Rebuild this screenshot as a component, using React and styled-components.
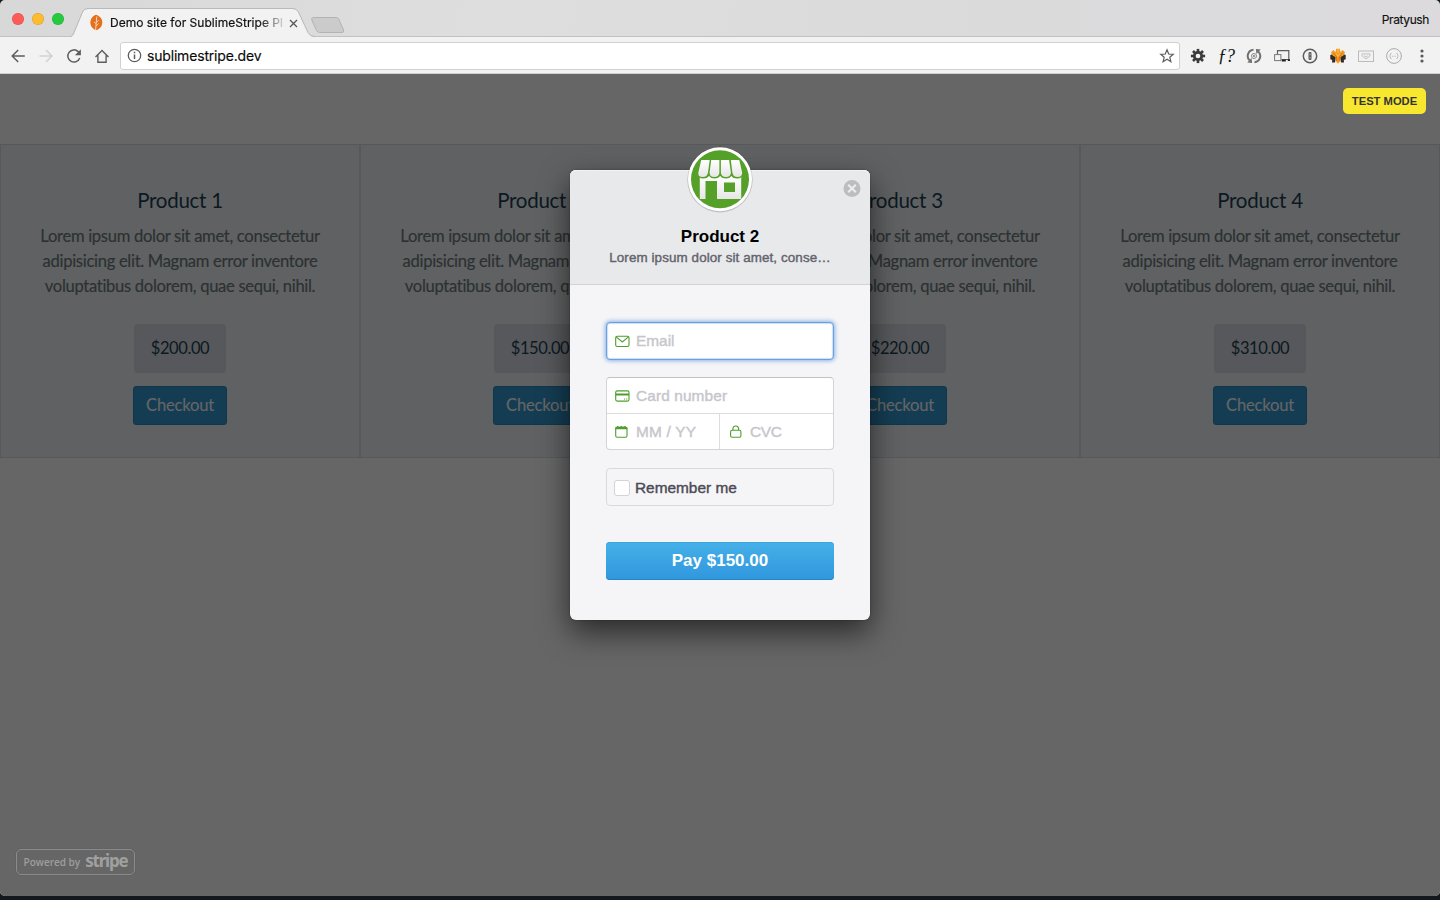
import React from "react";
import styled, { createGlobalStyle, css } from "styled-components";

const GlobalStyle = createGlobalStyle`
  *, *::before, *::after { box-sizing: border-box; }
  html, body { margin: 0; padding: 0; }
  body { background: #14181d; overflow: hidden; -webkit-font-smoothing: antialiased; }
  button, input { font: inherit; }
`;

const Window = styled.div`
  width: 1440px;
  height: 896px;
  display: flex;
  flex-direction: column;
  overflow: hidden;
  border-radius: 5px;
  background: #666;
  font-family: Inter, "Liberation Sans", sans-serif;
`;

/* ---------- Browser chrome ---------- */

const TabStrip = styled.div`
  flex: none;
  height: 37px;
  display: flex;
  align-items: flex-end;
  padding-left: 12px;
  background: linear-gradient(100deg, #d8d8d9 0%, #dededf 35%, #dadadb 70%, #dcdadd 100%);
  box-shadow: inset 0 -1px #c2c2c3;
`;

const Lights = styled.div`
  display: flex;
  gap: 8px;
  align-self: center;
  margin-top: 1px;
`;

const Light = styled.span`
  width: 12px;
  height: 12px;
  border-radius: 50%;
  background: ${(p) => p.$fill};
  box-shadow: inset 0 0 0 0.5px rgba(0, 0, 0, 0.15);
`;

const Tab = styled.div`
  position: relative;
  width: 244px;
  height: 29px;
  margin-left: 7px;
  display: flex;
  align-items: center;
  padding-left: 19px;
`;

const TabShape = styled.svg`
  position: absolute;
  left: 0;
  top: 0;
`;

const Favicon = styled.svg`
  position: relative;
  flex: none;
`;

const TabTitle = styled.span`
  position: relative;
  width: 173px;
  margin-left: 7px;
  padding-top: 1px;
  white-space: nowrap;
  font-size: 12px;
  line-height: 18px;
  font-weight: 400;
  letter-spacing: 0.02px;
  color: #111;
  -webkit-text-stroke: 0.2px #111;
  mask-image: linear-gradient(90deg, #000 150px, rgba(0, 0, 0, 0.15) 173px);
`;

const TabClose = styled.svg`
  position: relative;
  margin: 1px 0 0 6px;
`;

const NewTab = styled.svg`
  margin: 0 0 3px -5px;
`;

const Profile = styled.span`
  margin: 0 11px 8px auto;
  font-size: 12px;
  line-height: 18px;
  letter-spacing: -0.4px;
  color: #111;
  -webkit-text-stroke: 0.15px #111;
`;

const Toolbar = styled.div`
  flex: none;
  height: 37px;
  display: flex;
  align-items: center;
  padding: 0 10px;
  background: #f2f2f2;
  box-shadow: inset 0 -1px #d0d0d0;
`;

const NavGroup = styled.div`
  display: flex;
  gap: 12px;
`;

const Icon = styled.svg`
  flex: none;
  display: block;
`;

const AddressBar = styled.div`
  width: 1060px;
  height: 28px;
  margin-left: 10px;
  padding: 0 4px 0 6px;
  display: flex;
  align-items: center;
  border: 1px solid #d0d0d0;
  border-radius: 3px;
  background: #fff;
`;

const Url = styled.span`
  flex: 1;
  margin-left: 5px;
  padding-top: 1px;
  font-size: 14px;
  line-height: 20px;
  letter-spacing: -0.18px;
  color: #0a0a0a;
  -webkit-text-stroke: 0.15px #0a0a0a;
`;

const Extensions = styled.div`
  display: flex;
  align-items: center;
  gap: 12px;
  margin-left: 10px;
`;

const FunctionGlyph = styled.span`
  width: 16px;
  display: flex;
  justify-content: center;
  align-items: center;
  white-space: nowrap;
  font: italic 18px/18px "Liberation Serif", serif;
  letter-spacing: -0.8px;
  color: #111;
`;

/* ---------- Store page ---------- */

const Viewport = styled.main`
  position: relative;
  flex: 1;
  background: #fff;
`;

const Products = styled.section`
  display: grid;
  grid-template-columns: repeat(4, 1fr);
  padding-top: 70px;
`;

const Card = styled.article`
  height: 314px;
  padding: 41px 20px 0;
  display: flex;
  flex-direction: column;
  align-items: center;
  text-align: center;
  background: #f1f3f5;
  border: 1px solid #d8dce0;
  font-family: Lato, sans-serif;
`;

const CardTitle = styled.h2`
  margin: 0;
  font-size: 20.5px;
  line-height: 28px;
  font-weight: 400;
  letter-spacing: -0.25px;
  color: #1c4255;
`;

const CardText = styled.p`
  margin: 10px 0 25px;
  font-size: 16.6px;
  line-height: 25px;
  letter-spacing: -0.31px;
  color: #6b7b7c;
  -webkit-text-stroke: 0.15px #6b7b7c;
  white-space: nowrap;
`;

const Price = styled.div`
  width: 92px;
  height: 49px;
  padding-bottom: 1px;
  display: flex;
  align-items: center;
  justify-content: center;
  border-radius: 4px;
  background: #d9dbe3;
  font-size: 16.5px;
  letter-spacing: -0.4px;
  color: #1c4255;
`;

const CheckoutButton = styled.button`
  width: 94px;
  height: 39px;
  margin-top: 13px;
  padding: 0 0 1px;
  border: 1px solid #2c88bb;
  border-radius: 3px;
  background: #3498cf;
  color: #fff;
  font-size: 16.6px;
  letter-spacing: -0.2px;
`;

/* ---------- Checkout overlay ---------- */

const Overlay = styled.div`
  position: absolute;
  inset: 0;
  display: flex;
  justify-content: center;
  align-items: flex-start;
  padding-top: 96px;
  background: rgba(0, 0, 0, 0.6);
  font-family: "Liberation Sans", sans-serif;
`;

const TestBadge = styled.span`
  position: absolute;
  top: 14px;
  right: 14px;
  width: 83px;
  height: 26px;
  display: flex;
  align-items: center;
  justify-content: center;
  border-radius: 5px;
  background: #f8e72f;
  color: #333;
  font-size: 11.200px;
  font-weight: 700;
`;

const Modal = styled.div`
  position: relative;
  width: 300px;
  height: 450px;
  border-radius: 6px;
  background: #f5f5f7;
  box-shadow: 0 12px 30px rgba(0, 0, 0, 0.6), 0 0 2px rgba(0, 0, 0, 0.35);
`;

const ModalHeader = styled.header`
  height: 115px;
  padding-top: 57px;
  text-align: center;
  border-radius: 6px 6px 0 0;
  border-bottom: 1px solid #d2d2d5;
  background: #e8e9eb;
  box-shadow: inset 0 1px #f3f3f4;
`;

const StoreLogo = styled.svg`
  position: absolute;
  left: 115px;
  top: -26px;
`;

const CloseButton = styled.svg`
  position: absolute;
  right: 9px;
  top: 9px;
`;

const ModalTitle = styled.h1`
  margin: 0;
  font-size: 17px;
  line-height: 20px;
  font-weight: 700;
  color: #000;
`;

const mediumWeight = css`
  font-weight: 400;
  -webkit-text-stroke: 0.4px currentColor;
`;

const ModalDescription = styled.p`
  margin: 2px 0 0;
  font-size: 13.4px;
  line-height: 17px;
  letter-spacing: 0.1px;
  color: #63636d;
  ${mediumWeight}
`;

const Form = styled.div`
  padding: 37px 36px 0;
  display: flex;
  flex-direction: column;
`;

const Field = styled.label`
  flex: 1;
  height: 36px;
  display: flex;
  align-items: center;
  gap: 6px;
  padding-left: ${(p) => p.$inset || 8}px;
  font-size: 15.4px;
  line-height: 18px;
  letter-spacing: ${(p) => p.$spacing || 0}px;
  color: #c6c6cb;
  ${mediumWeight}
`;

const EmailBox = styled.div`
  height: 38px;
  display: flex;
  align-items: center;
  border: 1px solid #6a9fe0;
  border-radius: 4px;
  background: #fff;
  box-shadow: 0 0 4px 1px rgba(70, 135, 220, 0.6), inset 0 0 1px 0.5px rgba(70, 135, 220, 0.5);
`;

const CardBox = styled.div`
  height: 73px;
  margin-top: 17px;
  border: 1px solid #d4d4d7;
  border-top-color: #c2c2c6;
  border-radius: 4px;
  background: #fff;
`;

const FieldRow = styled.div`
  display: flex;
  height: ${(p) => p.$height}px;
  align-items: center;
  border-bottom: ${(p) => (p.$divided ? "1px solid #dcdcdf" : "0")};
`;

const Divider = styled.span`
  width: 1px;
  align-self: stretch;
  background: #dcdcdf;
`;

const RememberBox = styled.label`
  height: 38px;
  margin-top: 18px;
  display: flex;
  align-items: center;
  gap: 5px;
  padding: 1px 0 0 7px;
  border: 1px solid #d9d9dc;
  border-radius: 4px;
  font-size: 15.4px;
  line-height: 18px;
  color: #4b4a56;
  ${mediumWeight}
`;

const Check = styled.span`
  width: 16px;
  height: 16px;
  border: 1px solid #d3d3d6;
  border-radius: 3px;
  background: #fff;
`;

const PayButton = styled.button`
  height: 38px;
  margin-top: 36px;
  padding: 0 0 1px;
  border: 0;
  border-radius: 4px;
  background: linear-gradient(#45b0e8, #3097de);
  box-shadow: inset 0 1px #3fa5dd, inset 0 -1px #2784ca;
  color: #fff;
  font-size: 17px;
  font-weight: 700;
`;

const PoweredBy = styled.div`
  position: absolute;
  left: 16px;
  bottom: 21px;
  width: 119px;
  height: 26px;
  display: flex;
  align-items: center;
  justify-content: center;
  gap: 5px;
  border: 1.5px solid #8b8b8b;
  border-radius: 5px;
  box-shadow: 0 0 1px rgba(0, 0, 0, 0.35);
  color: #9e9e9e;
  font: 600 10px/16px "Open Sans", sans-serif;
`;

const StripeWord = styled.b`
  font: 700 17px/20px "Noto Sans", sans-serif;
  letter-spacing: -1.200px;
  margin-top: -3px;
  color: #a0a0a0;
`;

const line = { fill: "none", stroke: "#5d5d5d", strokeWidth: 1.5 };
const green = { fill: "none", stroke: "#4f9d2c", strokeWidth: 1.1 };

const gearTeeth = [0, 45, 90, 135, 180, 225, 270, 315];

function BrowserTabs() {
  return (
    <TabStrip>
      <Lights>
        <Light $fill="#fc5b57" />
        <Light $fill="#fdbc2d" />
        <Light $fill="#27c93f" />
      </Lights>
      <Tab>
        <TabShape width="244" height="29" viewBox="0 0 244 29">
          <path d="M0 29 C3 28 3 26 4 23 L12 4 Q13.500 1 17 1 H222 Q225.500 1 227 4 L237 25 Q238.500 28.500 243 29 Z" fill="#f2f2f2" />
          <path d="M-1 28.500 C1.500 28 2 26.500 3 24.500 L11.500 4 Q13 .5 17 .5 H222 Q225.500 .5 227.500 4 L237 24.500 Q239 28.500 244 28.500" fill="none" stroke="#b9b9ba" />
        </TabShape>
        <Favicon width="13" height="17" viewBox="0 0 13 17">
          <path d="M6 .8 C2.500 2 .4 5 .4 8.500 C.4 12 2.600 14.900 6 16.200 C10 15 12.300 12 12.300 8.500 C12.300 5 9.900 2 6 .8Z" fill="#e56f1b" />
          <path d="M6.800 2.500 L5.600 16 M6.300 8.700 L8.500 6.200 M6 12.200 L8.500 9.500 M4 8 L6.100 9.700" stroke="#f9dcc4" strokeWidth=".9" fill="none" />
        </Favicon>
        <TabTitle>Demo site for SublimeStripe Pl</TabTitle>
        <TabClose width="9" height="9" viewBox="0 0 9 9">
          <path d="M1 1 L8 8 M8 1 L1 8" stroke="#555" strokeWidth="1.3" />
        </TabClose>
      </Tab>
      <NewTab width="36" height="18" viewBox="0 0 36 18">
        <path d="M3.500 1.500 H26 Q28 1.500 29 3.500 L33.500 14 Q34.500 16.500 32 16.500 H9.500 Q7.500 16.500 6.500 14.500 L1.800 4 Q1 1.500 3.500 1.500Z" fill="#cbcbcb" stroke="#b3b3b3" />
      </NewTab>
      <Profile>Pratyush</Profile>
    </TabStrip>
  );
}

function BrowserToolbar() {
  return (
    <Toolbar>
      <NavGroup>
        <Icon width="16" height="16" viewBox="0 0 16 16">
          <path d="M14.800 8 H2.500 M8.200 2 L2.200 8 L8.200 14" {...line} />
        </Icon>
        <Icon width="16" height="16" viewBox="0 0 16 16">
          <path d="M1.500 8 H13.800 M8 2 L14 8 L8 14" {...line} stroke="#d2d2d2" />
        </Icon>
        <Icon width="16" height="16" viewBox="0 0 16 16">
          <path d="M13.700 10 A6.100 6.100 0 1 1 12.200 3.600 L13.500 5" {...line} />
          <path d="M14.900 1.200 V7.200 H8.900Z" fill="#5d5d5d" />
        </Icon>
        <Icon width="16" height="16" viewBox="0 0 16 16">
          <path d="M1.500 9 L8 2.400 L14.500 9 M3.900 7.300 V14.200 H12.100 V7.300" {...line} strokeWidth="1.400" />
        </Icon>
      </NavGroup>
      <AddressBar>
        <Icon width="15" height="15" viewBox="0 0 15 15">
          <circle cx="7.500" cy="7.500" r="6.200" {...line} strokeWidth="1.300" />
          <path d="M7.500 6.500 V11 M7.500 3.800 V5.300" stroke="#5d5d5d" strokeWidth="1.500" />
        </Icon>
        <Url>sublimestripe.dev</Url>
        <Icon width="16" height="16" viewBox="0 0 16 16">
          <path d="M8 1.800 L9.700 6 L14.300 6.300 L10.800 9.300 L11.900 13.700 L8 11.300 L4.100 13.700 L5.200 9.300 L1.700 6.300 L6.300 6Z" {...line} strokeWidth="1.200" />
        </Icon>
      </AddressBar>
      <Extensions>
        <Icon width="16" height="16" viewBox="0 0 16 16">
          {gearTeeth.map((a) => (
            <rect key={a} x="6.700" y=".9" width="2.600" height="4" fill="#3b3b3b" transform={`rotate(${a} 8 8)`} />
          ))}
          <circle cx="8" cy="8" r="3.700" fill="none" stroke="#3b3b3b" strokeWidth="2.700" />
        </Icon>
        <FunctionGlyph>ƒ?</FunctionGlyph>
        <Icon width="16" height="16" viewBox="0 0 16 16">
          <path d="M7.500 1.800 A6.200 6.200 0 0 0 3.600 12.400 M8.500 14.200 A6.200 6.200 0 0 0 12.400 3.600" {...line} stroke="#6f6f6f" strokeWidth="2" />
          <path d="M1.300 14.500 L6.100 14.900 L5.600 10.100Z M14.700 1.500 L9.900 1.100 L10.400 5.900Z" fill="#6f6f6f" />
          <circle cx="8" cy="8" r="2.500" {...line} stroke="#888" strokeWidth="1" />
          <circle cx="8" cy="8" r="1" fill="#777" />
        </Icon>
        <Icon width="16" height="16" viewBox="0 0 16 16">
          <path d="M3.500 6 V2.600 H14.800 V11.500 H7.500" {...line} strokeWidth="1.200" />
          <rect x=".6" y="6.600" width="6.300" height="6" {...line} stroke="#777" strokeWidth="1" />
          <path d="M7.800 11.500 H11.800 V13.400 H7.800Z M13.800 11.300 H16 V13 H13.800Z" fill="#222" />
        </Icon>
        <Icon width="16" height="16" viewBox="0 0 16 16">
          <circle cx="8" cy="8" r="6.700" {...line} strokeWidth="1.500" />
          <rect x="6.500" y="3.900" width="3" height="8.200" rx="1" fill="#5d5d5d" />
          <path d="M8 5.500 V7.300 M8 9 V10.500" stroke="#ddd" strokeWidth=".7" />
        </Icon>
        <Icon width="16" height="16" viewBox="0 0 16 16">
          <path d="M.3 7 L3 6 L6 9 L5 14.500 L2 14.500 L2.200 12 L.3 11.300Z M15.700 7 L13 6 L10 9 L11 14.500 L14 14.500 L13.800 12 L15.700 11.300Z" fill="#352b25" />
          <path d="M.9 4.300 L3.500 2 L5.600 4.300 L6.200 .8 H9.800 L10.400 4.300 L12.500 2 L15.100 4.300 L13.200 7.800 L10.600 9 L10.300 13 L8 15.700 L5.700 13 L5.400 9 L2.800 7.800Z" fill="#f39b21" />
          <path d="M3.300 5 L6.500 8.300 L6.800 13 M12.700 5 L9.500 8.300 L9.200 13" stroke="#dc6f1b" strokeWidth="1" fill="none" />
          <path d="M8 1 V5 M6 5.500 L8 8.500 L10 5.500" stroke="#ffc45b" strokeWidth="1" fill="none" />
        </Icon>
        <Icon width="16" height="16" viewBox="0 0 16 16">
          <rect x=".5" y="3" width="15" height="10.500" {...line} stroke="#bcbcbc" strokeWidth="1" />
          <path d="M4 5.900 H12 V7.800 L8 11 L4 7.800Z M6.200 7.700 L8 9 L9.800 7.700" {...line} stroke="#bcbcbc" strokeWidth=".9" />
        </Icon>
        <Icon width="16" height="16" viewBox="0 0 16 16">
          <circle cx="8" cy="8" r="7.400" {...line} stroke="#aaa" strokeWidth="1" />
          <path d="M5.500 5.300 Q4.400 5.300 4.400 6.400 V7.300 L3.600 8 L4.400 8.700 V9.600 Q4.400 10.700 5.500 10.700 M10.500 5.300 Q11.600 5.300 11.600 6.400 V7.300 L12.400 8 L11.600 8.700 V9.600 Q11.600 10.700 10.500 10.700 M6.200 8.300 H7 M7.600 8.300 H8.400 M9 8.300 H9.800" {...line} stroke="#aaa" strokeWidth=".8" />
        </Icon>
        <Icon width="16" height="16" viewBox="0 0 16 16" fill="#5a5a5a">
          <circle cx="8" cy="3" r="1.600" />
          <circle cx="8" cy="8" r="1.600" />
          <circle cx="8" cy="13" r="1.600" />
        </Icon>
      </Extensions>
    </Toolbar>
  );
}

const products = [
  { name: "Product 1", price: "$200.00" },
  { name: "Product 2", price: "$150.00" },
  { name: "Product 3", price: "$220.00" },
  { name: "Product 4", price: "$310.00" },
];

function ProductCard({ name, price }) {
  return (
    <Card>
      <CardTitle>{name}</CardTitle>
      <CardText>
        Lorem ipsum dolor sit amet, consectetur
        <br />
        adipisicing elit. Magnam error inventore
        <br />
        voluptatibus dolorem, quae sequi, nihil.
      </CardText>
      <Price>{price}</Price>
      <CheckoutButton>Checkout</CheckoutButton>
    </Card>
  );
}

function CheckoutModal() {
  return (
    <Modal>
      <ModalHeader>
        <ModalTitle>Product 2</ModalTitle>
        <ModalDescription>Lorem ipsum dolor sit amet, conse…</ModalDescription>
      </ModalHeader>
      <StoreLogo width="70" height="70" viewBox="0 0 70 70">
        <defs>
          <linearGradient id="store" x1="0" y1="0" x2="0" y2="1">
            <stop offset="0" stopColor="#fff" />
            <stop offset="1" stopColor="#e6e6e6" />
          </linearGradient>
        </defs>
        <circle cx="35" cy="35.700" r="32.700" fill="#000" opacity=".18" />
        <circle cx="35" cy="35.300" r="32" fill="#fff" />
        <circle cx="35" cy="35.300" r="29" fill="#55a028" />
        <path d="M14.800 32 H56.200 V55 H32 V37 H20.500 V55 H14.800Z M39 38.500 V48 H50 V38.500Z" fill="url(#store)" fillRule="evenodd" />
        <path d="M16 15.500 H54.500 L57.800 29 Q57.800 34.500 52 34.500 Q48 34.500 46.500 32 Q44.500 34.500 41 34.500 Q37 34.500 35.200 32 Q33 34.500 29.500 34.500 Q26 34.500 24 32 Q22 34.500 18.500 34.500 Q12.500 34.500 12.600 28.500Z" fill="#55a028" />
        <g fill="url(#store)">
          <path d="M16.200 16 H24.700 L23 28.500 Q22.200 33 17.800 33 Q12.700 33 13.400 28.500Z" />
          <path d="M26.200 16 H34.400 V28.500 Q34 33 29.300 33 Q24.500 33 24.600 28.500Z" />
          <path d="M35.900 16 H44.100 L45.900 28.500 Q45.600 33 41 33 Q36.300 33 35.900 28.500Z" />
          <path d="M45.800 16 H54.300 L57.100 28.500 Q57.200 33 52.600 33 Q48 33 47.400 28.500Z" />
        </g>
      </StoreLogo>
      <CloseButton width="18" height="18" viewBox="0 0 18 18">
        <circle cx="9" cy="9.500" r="8.500" fill="#bcbdbf" />
        <path d="M5.200 5.700 L12.800 13.300 M12.800 5.700 L5.200 13.300" stroke="#ededee" strokeWidth="2.100" />
      </CloseButton>
      <Form>
        <EmailBox>
          <Field>
            <Icon width="15" height="15" viewBox="0 0 15 15">
              <rect x=".7" y="2.200" width="13.300" height="10.300" rx="1.500" {...green} />
              <path d="M1.200 2.900 L7.300 8 L13.500 2.900" {...green} />
            </Icon>
            Email
          </Field>
        </EmailBox>
        <CardBox>
          <FieldRow $height={36} $divided>
            <Field $spacing={0.12}>
              <Icon width="15" height="15" viewBox="0 0 15 15">
                <rect x=".7" y="2.900" width="13.300" height="10.200" rx="1.500" {...green} />
                <path d="M.7 6.500 H14" {...green} strokeWidth="2" />
                <path d="M9 11 H10 M11.200 11 H12.200" {...green} strokeWidth="1" />
              </Icon>
              Card number
            </Field>
          </FieldRow>
          <FieldRow $height={35}>
            <Field $spacing={0.2}>
              <Icon width="15" height="15" viewBox="0 0 15 15">
                <rect x=".7" y="3.200" width="11.300" height="10" rx="1.500" {...green} />
                <path d="M.3 5.300 V4 Q.5 2.800 1.800 2.700 L2.600 1.800 L3.600 2.700 H5.400 L6.300 1.800 L7.200 2.700 H9 L10 1.800 L10.900 2.700 Q12.300 2.900 12.500 4 V5.300Z" fill="#4f9d2c" />
              </Icon>
              MM / YY
            </Field>
            <Divider />
            <Field $inset={9} $spacing={-0.3}>
              <Icon width="15" height="15" viewBox="0 0 15 15">
                <rect x="1.600" y="6.300" width="10.300" height="7" rx="1.500" {...green} />
                <path d="M3.900 6.300 V4.500 Q4.200 2 6.800 2 Q9.300 2 9.600 4.500 V6.300" {...green} />
              </Icon>
              CVC
            </Field>
          </FieldRow>
        </CardBox>
        <RememberBox>
          <Check />
          Remember me
        </RememberBox>
        <PayButton>Pay $150.00</PayButton>
      </Form>
    </Modal>
  );
}

export default function App() {
  return (
    <>
      <GlobalStyle />
      <Window>
        <BrowserTabs />
        <BrowserToolbar />
        <Viewport>
          <Products>
            {products.map((p) => (
              <ProductCard key={p.name} {...p} />
            ))}
          </Products>
          <Overlay>
            <CheckoutModal />
            <TestBadge>TEST MODE</TestBadge>
            <PoweredBy>
              Powered by <StripeWord>stripe</StripeWord>
            </PoweredBy>
          </Overlay>
        </Viewport>
      </Window>
    </>
  );
}
